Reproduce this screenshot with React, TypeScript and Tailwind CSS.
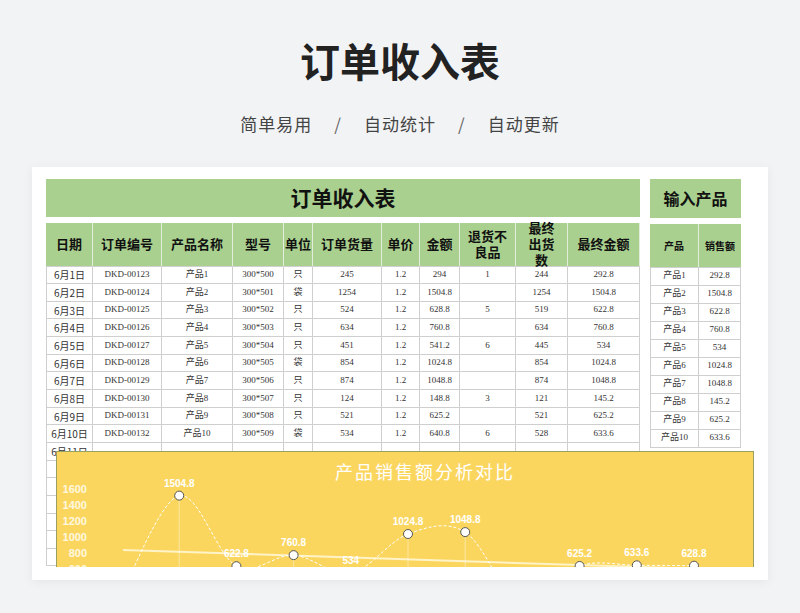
import React from "react";

const cols = [47, 69, 71, 51, 29, 69, 38, 40, 56, 52, 72];
const heads = ["日期", "订单编号", "产品名称", "型号", "单位", "订单货量", "单价", "金额", "退货不良品", "最终出货数", "最终金额"];

const rows = [
  ["6月1日", "DKD-00123", "产品1", "300*500", "只", "245", "1.2", "294", "1", "244", "292.8"],
  ["6月2日", "DKD-00124", "产品2", "300*501", "袋", "1254", "1.2", "1504.8", "", "1254", "1504.8"],
  ["6月3日", "DKD-00125", "产品3", "300*502", "只", "524", "1.2", "628.8", "5", "519", "622.8"],
  ["6月4日", "DKD-00126", "产品4", "300*503", "只", "634", "1.2", "760.8", "", "634", "760.8"],
  ["6月5日", "DKD-00127", "产品5", "300*504", "只", "451", "1.2", "541.2", "6", "445", "534"],
  ["6月6日", "DKD-00128", "产品6", "300*505", "袋", "854", "1.2", "1024.8", "", "854", "1024.8"],
  ["6月7日", "DKD-00129", "产品7", "300*506", "只", "874", "1.2", "1048.8", "", "874", "1048.8"],
  ["6月8日", "DKD-00130", "产品8", "300*507", "只", "124", "1.2", "148.8", "3", "121", "145.2"],
  ["6月9日", "DKD-00131", "产品9", "300*508", "只", "521", "1.2", "625.2", "", "521", "625.2"],
  ["6月10日", "DKD-00132", "产品10", "300*509", "袋", "534", "1.2", "640.8", "6", "528", "633.6"],
  ["6月11日", "", "", "", "", "", "", "", "", "", ""],
  ...Array.from({ length: 6 }, () => Array(11).fill("")),
];

const values = [292.8, 1504.8, 622.8, 760.8, 534, 1024.8, 1048.8, 145.2, 625.2, 633.6, 628.8];
const pts = values.map((v, i) => [65 + i * 57.2, 116 - ((v - 600) * 16) / 200]);

function smooth(p: number[][]) {
  let d = `M${p[0][0]},${p[0][1]}`;
  for (let i = 0; i < p.length - 1; i++) {
    const a = p[i - 1] || p[i], b = p[i], c = p[i + 1], e = p[i + 2] || c;
    d += ` C${b[0] + (c[0] - a[0]) / 6},${b[1] + (c[1] - a[1]) / 6} ${c[0] - (e[0] - b[0]) / 6},${c[1] - (e[1] - b[1]) / 6} ${c[0]},${c[1]}`;
  }
  return d;
}

const serif = { fontFamily: '"Liberation Serif","Noto Sans CJK SC",serif' };

export default function App() {
  return (
    <div className="w-[800px] h-[613px] bg-[#f2f3f5] flex flex-col items-center" style={{ fontFamily: '"Noto Sans CJK SC",sans-serif' }}>
      <h1 className="mt-[34px] text-[40px] leading-[52px] font-bold text-[#222]">订单收入表</h1>
      <p className="mt-[25px] text-[17px] text-[#444] tracking-[1px] flex gap-[22px]">
        <span>简单易用</span><span className="text-[#666]">/</span><span>自动统计</span><span className="text-[#666]">/</span><span>自动更新</span>
      </p>
      <div className="mt-[30px] w-[736px] h-[413px] bg-white shadow-[0_2px_10px_rgba(0,0,0,0.06)] pt-[12px] pl-[14px] pb-[13px]">
        <div className="relative h-[388px] overflow-hidden flex gap-[10px]">
          <div className="w-[594px] flex flex-col">
            <div className="h-[39px] bg-[#a9d08e] flex items-center justify-center text-[21px] font-bold text-[#111]">订单收入表</div>
            <div className="h-[6px]" />
            <div className="flex h-[44px] bg-[#a9d08e] border-b border-[#d0d0d0]">
              {heads.map((h, i) => (
                <div key={i} style={{ width: cols[i] }} className={`border-r border-[#e4eedc] flex items-center justify-center text-center text-[13px] font-bold leading-[16px] text-[#111] ${i === 8 || i === 9 ? "px-[8px]" : "px-0"}`}>{h}</div>
              ))}
            </div>
            {rows.map((r, ri) => (
              <div key={ri} className="flex h-[18px] border-b border-[#cfcfcf]">
                {r.map((c, i) => (
                  <div key={i} style={{ width: cols[i], ...(i ? serif : {}) }} className={`border-r border-[#cfcfcf] flex items-center justify-center ${i ? "text-[9px]" : "text-[10px] border-l"} text-[#333]`}>{c}</div>
                ))}
              </div>
            ))}
          </div>
          <div className="w-[91px] flex flex-col">
            <div className="h-[39px] bg-[#a9d08e] flex items-center justify-center text-[16px] font-bold text-[#111]">输入产品</div>
            <div className="h-[6px]" />
            <div className="flex h-[44px] bg-[#a9d08e] border-b border-[#d0d0d0] text-[10px] font-bold text-[#111]">
              <div className="w-[49px] border-r border-[#e4eedc] flex items-center justify-center">产品</div>
              <div className="w-[42px] flex items-center justify-center">销售额</div>
            </div>
            {rows.slice(0, 10).map((r, ri) => (
              <div key={ri} className="flex h-[18px] border-b border-[#cfcfcf] text-[9px] text-[#333]" style={serif}>
                <div className="w-[49px] border-x border-[#cfcfcf] flex items-center justify-center">{r[2]}</div>
                <div className="w-[42px] border-r border-[#cfcfcf] flex items-center justify-center">{r[10]}</div>
              </div>
            ))}
          </div>
          <div className="absolute left-[10px] top-[272px] w-[698px] h-[160px] bg-[#fbd65f] border border-[#9aa060]">
            <div className="text-center text-white text-[18px] tracking-[2px] mt-[8px] pl-[40px]" style={serif}>产品销售额分析对比</div>
            <svg className="absolute left-0 top-0" width="698" height="160">
              {[1600, 1400, 1200, 1000, 800, 600].map((v, i) => (
                <text key={v} x="30" y={41 + i * 16} textAnchor="end" fill="#fff8e0" fontSize="11" fontWeight="700" fontFamily="Liberation Sans">{v}</text>
              ))}
              <line x1="66" y1="98" x2="645" y2="117" stroke="#fff3c8" strokeWidth="2" />
              {pts.map(([x, y], i) => <line key={i} x1={x} y1={y} x2={x} y2="160" stroke="#fff" strokeOpacity="0.6" strokeWidth="0.7" />)}
              <path d={smooth(pts)} fill="none" stroke="#fff" strokeWidth="1" strokeDasharray="3 2" />
              {pts.map(([x, y], i) => (
                <g key={i}>
                  <circle cx={x} cy={y} r="4.5" fill="#fff" stroke="#555" strokeWidth="1" />
                  <text x={x} y={y - 9} textAnchor="middle" fill="#fff" fontSize="10" fontWeight="700" fontFamily="Liberation Sans">{values[i]}</text>
                </g>
              ))}
            </svg>
          </div>
        </div>
      </div>
    </div>
  );
}
